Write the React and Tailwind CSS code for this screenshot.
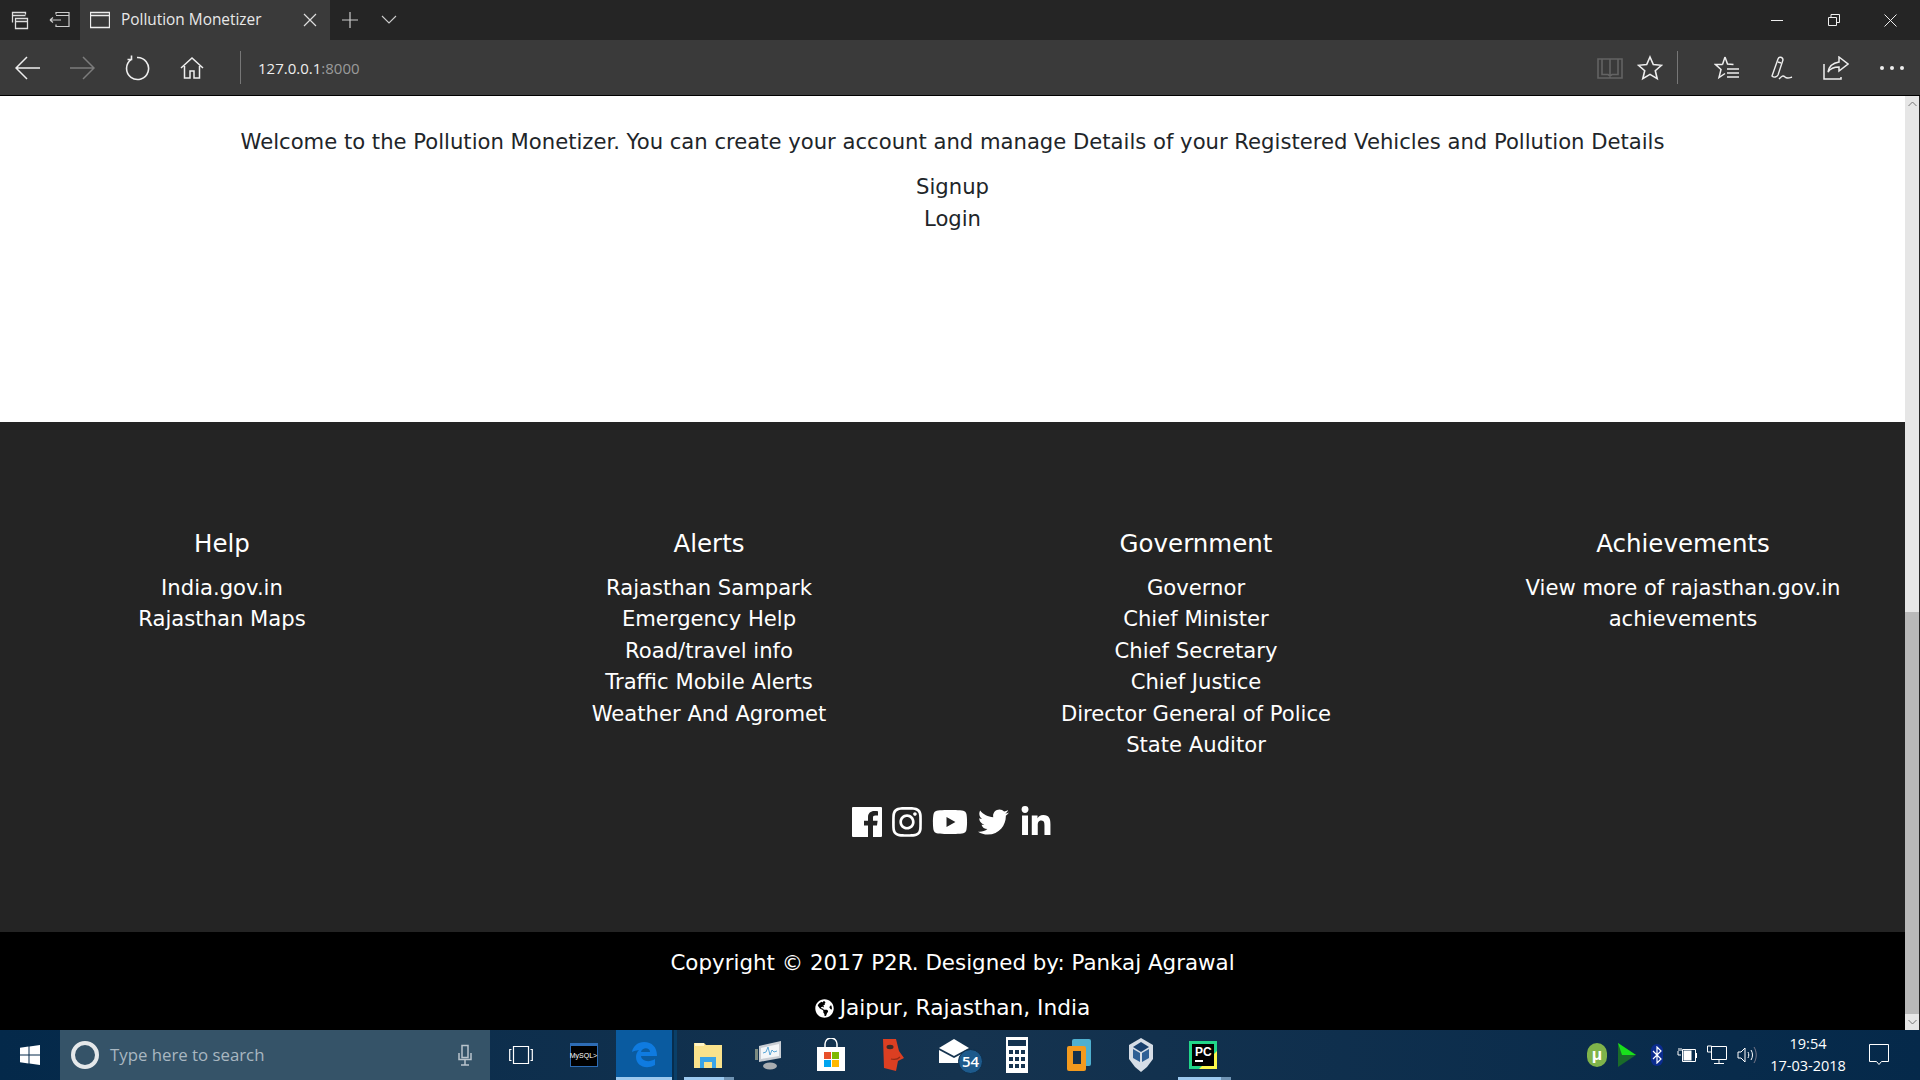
import React from "react";
import { FaInstagram, FaYoutube, FaTwitter, FaLinkedinIn, FaGlobeAmericas } from "react-icons/fa";

const Ico = ({ w = 24, h = 24, children, className = "", stroke = "#fff", sw = 1.5 }) => (
  <svg width={w} height={h} viewBox={`0 0 ${w} ${h}`} fill="none" stroke={stroke} strokeWidth={sw} className={className}>
    {children}
  </svg>
);

const cols = [
  { title: "Help", items: ["India.gov.in", "Rajasthan Maps"] },
  { title: "Alerts", items: ["Rajasthan Sampark", "Emergency Help", "Road/travel info", "Traffic Mobile Alerts", "Weather And Agromet"] },
  { title: "Government", items: ["Governor", "Chief Minister", "Chief Secretary", "Chief Justice", "Director General of Police", "State Auditor"] },
  { title: "Achievements", items: ["View more of rajasthan.gov.in achievements"] },
];

function TitleBar() {
  return (
    <div className="h-10 bg-[#252525] flex items-center text-white">
      <div className="w-10 flex justify-center">
        <Ico w={20} h={20} stroke="#ddd" sw={1.3}><path d="M2.500 12.500V2.500h13v2M2.500 5.500h13M5.500 8.500h12v10h-12zM5.500 11.500h12" /></Ico>
      </div>
      <div className="w-10 flex justify-center">
        <Ico w={22} h={20} stroke="#ccc" sw={1.2}><path d="M7 4.500V2.500h13v14H7v-2M7 5.500h13M1 10h11M1 10l3-2.500M1 10l3 2.500" /></Ico>
      </div>
      <div className="w-[250px] h-10 bg-[#3a3a3a] flex items-center pl-[10px]">
        <Ico w={20} h={18} stroke="#eee" sw={1.3}><path d="M.5 1.500h19v15H.5zM.5 4.500h19" /></Ico>
        <span className="ml-[11px] text-[15.400px] text-[#e8e8e8] font-['Open_Sans','Noto_Sans',sans-serif]">Pollution Monetizer</span>
        <div className="ml-auto mr-[13px]">
          <Ico w={14} h={14} stroke="#ddd" sw={1.2}><path d="M1 1l12 12M13 1L1 13" /></Ico>
        </div>
      </div>
      <div className="w-10 flex justify-center">
        <Ico w={18} h={18} stroke="#ccc" sw={1.2}><path d="M9 1v16M1 9h16" /></Ico>
      </div>
      <div className="w-[38px] flex justify-center">
        <Ico w={16} h={10} stroke="#ccc" sw={1.1}><path d="M1 1l7 7 7-7" /></Ico>
      </div>
      <div className="ml-auto flex items-center">
        <div className="w-[57px] flex justify-center">
          <Ico w={12} h={12} stroke="#eee" sw={1}><path d="M0 6.500h12" /></Ico>
        </div>
        <div className="w-[57px] flex justify-center">
          <Ico w={12} h={12} stroke="#eee" sw={1}><path d="M.5 3.500h8v8h-8zM3 3.500V.5h8.500v8H8.500" /></Ico>
        </div>
        <div className="w-[57px] mr-[1px] flex justify-center">
          <Ico w={13} h={13} stroke="#eee" sw={1}><path d="M.5.5l12 12M12.500.5l-12 12" /></Ico>
        </div>
      </div>
    </div>
  );
}

function ToolBar() {
  return (
    <div className="h-[56px] bg-[#3a3a3a] border-b border-black flex items-center text-white">
      <div className="w-[55px] flex justify-center">
        <Ico w={26} h={24} stroke="#eee" sw={1.5}><path d="M1 12h24M12 1L1 12l11 11" /></Ico>
      </div>
      <div className="w-[54px] flex justify-center">
        <Ico w={26} h={24} stroke="#7c7c7c" sw={1.5}><path d="M1 12h24M14 1l11 11-11 11" /></Ico>
      </div>
      <div className="w-[55px] flex justify-center">
        <Ico w={26} h={26} stroke="#eee" sw={1.6}><path d="M7.500 4.300A11 11 0 1 0 13 2.500M7.500 .5v4H3.500" /></Ico>
      </div>
      <div className="w-[55px] flex justify-center">
        <Ico w={24} h={24} stroke="#eee" sw={1.5}><path d="M1 12L12 2l11 10M4.500 10v12h5.500v-7h4v7h5.500V10" /></Ico>
      </div>
      <div className="ml-[21px] w-px h-[33px] bg-[#777]" />
      <div className="ml-[17px] mt-[2px] text-[15px] font-['Open_Sans','Noto_Sans',sans-serif]">
        <span className="text-[#eee]">127.0.0.1</span><span className="text-[#9a9a9a]">:8000</span>
      </div>
      <div className="ml-auto flex items-center">
        <Ico w={26} h={24} stroke="#636363" sw={1.6} className="mr-[14px]"><path d="M1 22V3h24v19zM13 3v19M5 3v15.500h6l2 1.500 2-1.500h6V3" /></Ico>
        <Ico w={26} h={26} stroke="#eee" sw={1.6} className="mr-[14px]"><path d="M13 2l3.300 7.500 8.200.8-6.200 5.400 1.900 8-7.200-4.300-7.200 4.300 1.900-8-6.200-5.400 8.200-.8z" /></Ico>
        <div className="w-px h-[33px] bg-[#777] mr-[36px]" />
        <Ico w={26} h={26} stroke="#eee" sw={1.5} className="mr-[30px]"><path d="M11 2l2.500 7 6 .5M8.500 9.500H1.500L7 14.500l-2 8 6-4M11 2L8.500 9.500M13 14h12M13 18h12M13 22h12" /></Ico>
        <Ico w={24} h={26} stroke="#eee" sw={1.4} className="mr-[29px]"><path d="M2 21L8 4c1-3 5-2 5 1L8 20c-1 2-4 3-6 1zM8 7l3 1M9 24c3-3 4-4 6 -2s4 1 7 0" /></Ico>
        <Ico w={26} h={24} stroke="#eee" sw={1.5} className="mr-[31px]"><path d="M1 8v15h17v-2M16 1l9 7-9 7v-4c-6 0-9 2-11 5 1-6 5-9 11-10z" /></Ico>
        <div className="w-[24px] mr-[16px] flex justify-between">
          <span className="w-[4px] h-[4px] rounded-full bg-[#eee]" />
          <span className="w-[4px] h-[4px] rounded-full bg-[#eee]" />
          <span className="w-[4px] h-[4px] rounded-full bg-[#eee]" />
        </div>
      </div>
    </div>
  );
}

function Page() {
  return (
    <div className="flex-1 min-w-0 overflow-hidden flex flex-col text-center font-['Verdana','DejaVu_Sans',sans-serif]">
      <div className="h-[326px] bg-white text-[#212529] pt-[30px] text-[21.150px] leading-[31.400px]">
        <p className="mb-[14px]">Welcome to the Pollution Monetizer. You can create your account and manage Details of your Registered Vehicles and Pollution Details</p>
        <div>Signup</div>
        <div>Login</div>
      </div>
      <div className="h-[510px] bg-[#242424] text-white flex flex-col">
        <div className="grid grid-cols-4 -mx-[21.500px] pt-[104px] h-[358px] text-[21.150px] leading-[31.400px]">
          {cols.map((c) => (
            <div key={c.title} className="px-[15px]">
              <h5 className="text-[24.500px] leading-[36px] mb-[10px]">{c.title}</h5>
              {c.items.map((i) => <div key={i}>{i}</div>)}
            </div>
          ))}
        </div>
        <div className="mt-[27px] flex justify-center items-center h-[30px]">
          <svg width="30" height="30" viewBox="0 0 30 30" className="mr-[10px]"><path d="M1 0h28a1 1 0 0 1 1 1v28a1 1 0 0 1-1 1h-8V18.500h4l.6-4.800H21v-3c0-1.400.4-2.300 2.400-2.300H26V4.200C25.500 4.100 24 4 22.300 4 18.700 4 16 6.200 16 10.300v3.400h-4v4.800h4V30H1a1 1 0 0 1-1-1V1a1 1 0 0 1 1-1z" fill="#fff" /></svg>
          <FaInstagram className="w-[30px] h-[34px] mr-[10px]" />
          <FaYoutube className="w-[36px] h-[34px] mr-[10px]" />
          <FaTwitter className="w-[31px] h-[34px] mr-[10px]" />
          <FaLinkedinIn className="w-[34px] h-[33px]" />
        </div>
      </div>
      <div className="h-[98px] bg-black text-white text-[21.400px] leading-[31.400px] pt-[15px]">
        <p className="mb-[14px]">Copyright © 2017 P2R. Designed by: Pankaj Agrawal</p>
        <p className="flex justify-center items-center gap-[6px] text-[21.700px]"><FaGlobeAmericas className="w-[19px] h-[19px]" />Jaipur, Rajasthan, India</p>
      </div>
    </div>
  );
}

function Scrollbar() {
  return (
    <div className="w-[15px] bg-[#252525] flex">
      <div className="w-[14px] bg-[#e6e6e6] flex flex-col">
        <div className="h-[16px] flex items-center justify-center">
          <Ico w={9} h={6} stroke="#777" sw={1}><path d="M.5 5L4.500 1l4 4" /></Ico>
        </div>
        <div className="h-[500px]" />
        <div className="flex-1 bg-[#b9b9b9]" />
        <div className="h-[16px] flex items-center justify-center">
          <Ico w={9} h={6} stroke="#777" sw={1}><path d="M.5 1l4 4 4-4" /></Ico>
        </div>
      </div>
    </div>
  );
}

const Slot = ({ w = 62, children, className = "", under }) => (
  <div style={{ width: w }} className={`relative h-[50px] flex items-center justify-center ${className}`}>
    {children}
    {under && (
      <div className="absolute left-[7px] right-[4px] bottom-0 h-[3px] flex">
        <div className="flex-1 bg-[#9cc9ef]" />
        <div className="w-[10px] bg-[#6f93b3]" />
      </div>
    )}
  </div>
);

function TaskBar() {
  return (
    <div className="h-[50px] bg-linear-to-r from-[#04294a] via-[#15334f] to-[#05294a] flex items-center text-white font-['Open_Sans','Noto_Sans',sans-serif]">
      <div className="w-[60px] flex justify-center">
        <svg width="20" height="20" viewBox="0 0 20 20" fill="#fff"><path d="M0 2.800l8.500-1.200v8H0zM9.500 1.400L20 0v9.600H9.500zM0 10.500h8.500v8L0 17.300zM9.500 10.500H20V20L9.500 18.600z" /></svg>
      </div>
      <div className="w-[430px] h-[50px] bg-[#355368] flex items-center pl-[11px] pr-[12px]">
        <div className="w-[28px] h-[28px] rounded-full border-[4px] border-[#e5e8ea]" />
        <span className="ml-[11px] text-[16.800px] text-[#a9b7c1]">Type here to search</span>
        <div className="ml-auto mr-[6px]">
          <Ico w={14} h={22} stroke="#b9c4cc" sw={1.5}><path d="M4 1.500h6v12H4zM1 9v6.500h12V9M7 15.500V21M3 21h8" /></Ico>
        </div>
      </div>
      <Slot w={61}>
        <Ico w={24} h={18} stroke="#fff" sw={1.2}><path d="M4.500 .5h15v17h-15zM2.500 3.500H.7v11h1.800M21.500 3.500h1.800v11h-1.800" /></Ico>
      </Slot>
      <Slot w={65}>
        <div className="w-[28px] h-[24px] bg-black border border-[#2d6cb5] border-t-[3px] flex items-center justify-center text-[7px] text-white font-['Liberation_Sans',sans-serif]">MySQL&gt;</div>
      </Slot>
      <Slot w={56} className="bg-[#0a5ba0]">
        <svg width="26" height="26" viewBox="0 0 26 26" fill="#0f7be0">
          <path d="M1 10C2 4 7 0 13 0c8 0 13 5 13 14H10c.5 5 8 7 14 3v6c-9 5-19 1-19-8 0-3 1-5 3-7-3 .5-5 1-7 2zM10 10h9c0-5-8-5-9 0z" />
        </svg>
        <div className="absolute left-0 right-0 bottom-0 h-[3px] bg-[#9cc9ef]" />
      </Slot>
      <div className="w-[2px] h-[50px] bg-[#072d4e]" />
      <div className="w-[3px] h-[50px] bg-[#0a3f68]" />
      <Slot w={61} under>
        <svg width="28" height="26" viewBox="0 0 28 26"><path d="M0 1h10l2 2h16v23H0z" fill="#f9e28c" /><path d="M1 1h9v3H1z" fill="#fff4c4" /><path d="M6 26V15h16v11h-4v-6h-8v6z" fill="#3aa4e8" /></svg>
      </Slot>
      <Slot>
        <svg width="30" height="32" viewBox="0 0 30 32"><path d="M5 7l22-5v17L5 23z" fill="#c9ced4" /><path d="M7 9l18-4v12L7 20z" fill="#f3f6f8" /><path d="M9 14l3-1 2-5 2 8 2-5 2 2 3-1" fill="none" stroke="#5aa7d8" strokeWidth="1" /><ellipse cx="16" cy="27" rx="7" ry="3.500" fill="#a8adb1" /><rect x="1" y="10" width="3" height="11" fill="#7b8a80" /></svg>
      </Slot>
      <Slot>
        <svg width="30" height="34" viewBox="0 0 30 34"><path d="M9 10V6a6 6 0 0 1 12 0v4" fill="none" stroke="#fff" strokeWidth="1.500" /><rect x="1" y="9" width="28" height="24" fill="#fff" /><rect x="8" y="14" width="7" height="7" fill="#e8502a" /><rect x="16" y="14" width="7" height="7" fill="#7fb900" /><rect x="8" y="22" width="7" height="7" fill="#00a4ef" /><rect x="16" y="22" width="7" height="7" fill="#ffb900" /></svg>
      </Slot>
      <Slot>
        <svg width="24" height="34" viewBox="0 0 24 34"><path d="M2 1h13l3 12 5 7-6 3-2 10-12-3z" fill="#dc3f22" /><ellipse cx="9" cy="9" rx="3.500" ry="2.200" fill="#3a2a28" /><path d="M10 21c4 1 7 0 9-2" fill="none" stroke="#8f2a16" strokeWidth="1.200" /></svg>
      </Slot>
      <Slot>
        <div className="relative w-[44px] h-[38px] translate-x-[6px]">
          <svg width="30" height="24" viewBox="0 0 30 24" className="absolute left-0 top-[3px]"><path d="M15 0l15 9-15 8L0 9z" fill="#fff" /><path d="M0 11l15 8 15-8v13H0z" fill="#fff" /></svg>
          <div className="absolute left-[19px] top-[13px] w-[25px] h-[25px] rounded-full bg-[#1d5a8c] border border-[#0f2e4a] flex items-center justify-center text-[15px] font-semibold text-white">54</div>
        </div>
      </Slot>
      <Slot>
        <svg width="22" height="36" viewBox="0 0 22 36"><rect width="22" height="36" fill="#fff" /><rect x="2" y="3" width="18" height="6" fill="#15334f" />{[13, 20, 27].map((y) => [3, 9, 15].map((x) => <rect key={`${x}${y}`} x={x} y={y} width="4" height="4" fill="#15334f" />))}</svg>
      </Slot>
      <Slot>
        <svg width="26" height="34" viewBox="0 0 26 34"><rect x="6" y="1" width="19" height="27" rx="2" fill="#4fb0cf" /><rect x="1" y="8" width="19" height="25" rx="2" fill="#f39a1e" /><rect x="7" y="13" width="8" height="13" fill="#16324c" /></svg>
      </Slot>
      <Slot w={61}>
        <svg width="26" height="36" viewBox="0 0 26 36"><path d="M13 1l12 7v14l-6 8-6 5-6-5-6-8V8z" fill="#d6dde6" /><path d="M13 5l8 5-8 5-8-5z" fill="#18406e" /><path d="M5 12l7 4v9l-7-4zM21 12l-7 4v9l7-4z" fill="#2e5f95" /></svg>
      </Slot>
      <Slot under w={64}>
        <svg width="28" height="28" viewBox="0 0 28 28"><rect width="28" height="28" fill="#21d789" /><path d="M28 10v18H10z" fill="#fcf84a" /><rect x="3" y="3" width="22" height="22" fill="#000" /><rect x="6" y="19" width="8" height="2" fill="#fff" /><text x="6" y="15" fontSize="12" fontWeight="700" fill="#fff" fontFamily="Liberation Sans">PC</text></svg>
      </Slot>
      <div className="ml-auto flex items-center">
        <div className="w-[30px] flex justify-center">
          <div className="w-[20px] h-[24px] rounded-full bg-[#7fb34a] flex items-center justify-center text-[17px] font-bold text-white font-['Liberation_Sans',sans-serif]">μ</div>
        </div>
        <div className="w-[30px] flex justify-center">
          <svg width="18" height="24" viewBox="0 0 18 24"><path d="M0 0l18 12L0 24z" fill="#1a6b2a" /><path d="M0 0l18 12H4z" fill="#19e01c" /></svg>
        </div>
        <div className="w-[30px] flex justify-center">
          <div className="w-[12px] h-[22px] rounded-full bg-[#0b2c8f] flex items-center justify-center">
            <Ico w={10} h={18} stroke="#fff" sw={1.2}><path d="M1 5l8 8-4 4V1l4 4-8 8" /></Ico>
          </div>
        </div>
        <div className="w-[30px] flex justify-center">
          <svg width="20" height="16" viewBox="0 0 20 16" fill="none" stroke="#fff"><path d="M5.500 2.500h13v12h-13z" /><rect x="7" y="4" width="7" height="9" fill="#fff" /><path d="M19.500 6v5M1 4v4h3M2 1v3M4 1v3" /></svg>
        </div>
        <div className="w-[30px] flex justify-center">
          <Ico w={20} h={20} stroke="#fff" sw={1}><path d="M4.500 1.500h15v13h-15zM.5 1h4v6h-4zM12 14.500v4M7 18.500h10" /></Ico>
        </div>
        <div className="w-[30px] flex justify-center">
          <Ico w={20} h={18} stroke="#fff" sw={1}><path d="M1 6v6h3l4 4V2L4 6zM11 6c1 2 1 4 0 6M14 4c2 3 2 7 0 10" /><path d="M17 1c3 5 3 11 0 16" stroke="#778" /></Ico>
        </div>
        <div className="ml-[8px] w-[76px] text-center text-[14.500px] leading-[22px] text-white">
          <div>19:54</div>
          <div>17-03-2018</div>
        </div>
        <div className="w-[74px] pr-[8px] flex justify-center">
          <Ico w={20} h={22} stroke="#fff" sw={1}><path d="M.5.5h19v17h-7l-2.500 3-2.500-3h-7z" /></Ico>
        </div>
      </div>
    </div>
  );
}

export default function App() {
  return (
    <div className="w-[1920px] h-[1080px] overflow-hidden flex flex-col">
      <TitleBar />
      <ToolBar />
      <div className="flex-1 flex min-h-0">
        <Page />
        <Scrollbar />
      </div>
      <TaskBar />
    </div>
  );
}
